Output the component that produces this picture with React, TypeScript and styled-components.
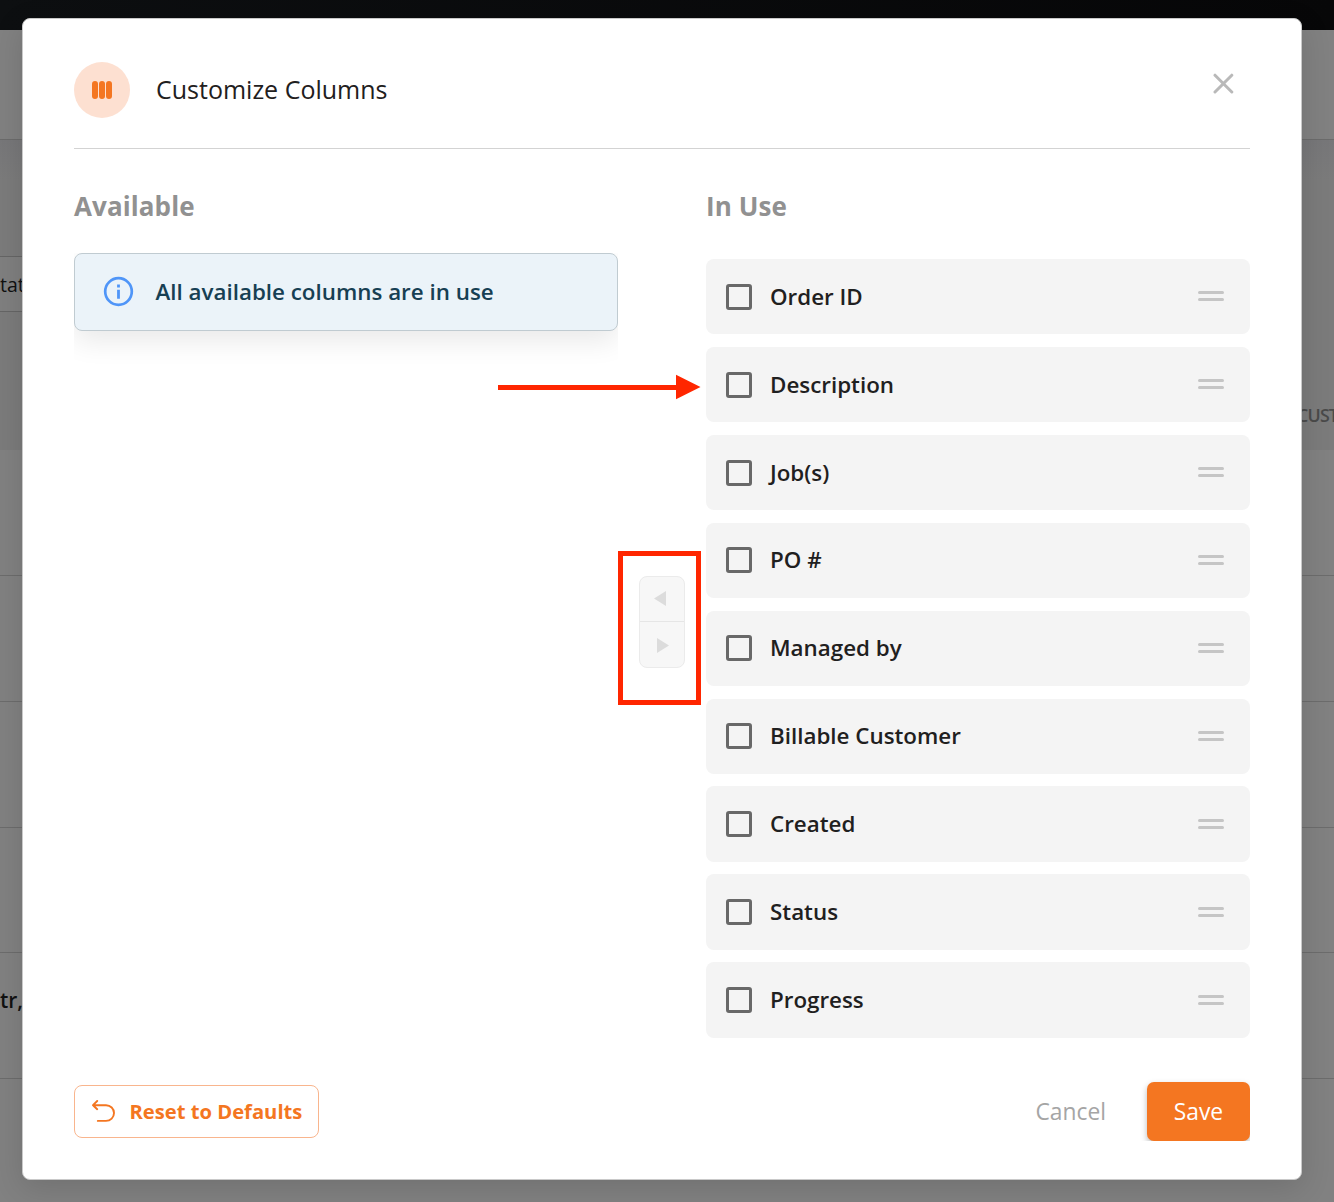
import React from "react";
import styled, { createGlobalStyle } from "styled-components";

const GlobalStyle = createGlobalStyle`
  *, *::before, *::after { box-sizing: border-box; }
  body {
    margin: 0;
    overflow: hidden;
    font-family: "Open Sans", "Noto Sans", sans-serif;
  }
  button { font-family: inherit; cursor: pointer; }
`;

const Screen = styled.div`
  position: relative;
  width: 1334px;
  height: 1202px;
  overflow: hidden;
`;

/* Dimmed page behind the dialog */
const Page = styled.div`
  display: flex;
  flex-direction: column;
  height: 100%;
  background: #818181;
`;

const TopBar = styled.div`
  height: 30px;
  background: linear-gradient(90deg, #0d0f11, #070708);
`;

const PageHeader = styled.div`
  height: 110px;
  border-bottom: 1px solid #6b6b6b;
`;

const FilterArea = styled.div`
  height: 310.3px;
  padding-top: 116px;
  background: linear-gradient(#777779, #7b7b7b 40px);
  display: flex;
  flex-direction: column;
`;

const FilterBox = styled.div`
  width: 400px;
  height: 56px;
  padding-top: 1px;
  border: 1px solid #656565;
  border-left: 0;
  background: #7f7f7f;
  display: flex;
  align-items: center;
  font-size: 19.5px;
  color: #111;
`;

const TableHead = styled.div`
  flex: 1;
  display: flex;
  justify-content: flex-end;
  align-items: flex-end;
  padding-bottom: 22px;
  white-space: nowrap;
`;

const TableHeadCell = styled.span`
  width: 37px;
  font-size: 17.8px;
  line-height: 25px;
  font-weight: 600;
  letter-spacing: -0.8px;
  color: #4a4a4a;
`;

const TableRow = styled.div`
  height: 125.75px;
  padding-bottom: 32px;
  border-bottom: 1px solid #6c6c6c;
  display: flex;
  align-items: center;
  font-size: 21px;
  font-weight: 600;
  color: #111;
  white-space: nowrap;
`;

const Overlay = styled.div`
  position: absolute;
  inset: 0;
  padding: 18px 32px 22px 22px;
`;

const Dialog = styled.section`
  width: 1280px;
  height: 1162px;
  padding: 43px 51px 0;
  background: #fff;
  border: 1px solid #c9c9c9;
  border-radius: 8px;
  box-shadow: 0 8px 30px rgba(0, 0, 0, 0.13);
  display: flex;
  flex-direction: column;
`;

const Header = styled.header`
  height: 87px;
  border-bottom: 1px solid #d3d3d3;
  display: flex;
  align-items: flex-start;
`;

const HeaderIcon = styled.div`
  width: 56px;
  height: 56px;
  border-radius: 50%;
  background: #fde0d1;
  display: flex;
  align-items: center;
  justify-content: center;
  gap: 1px;
`;

const IconBar = styled.span`
  width: 6px;
  height: 18px;
  border-radius: 3px;
  background: #f47621;
`;

const Title = styled.h1`
  flex: 1;
  margin: 0 0 0 26px;
  font-size: 25px;
  line-height: 54px;
  font-weight: 400;
  color: #1f2020;
`;

const CloseButton = styled.button`
  margin: 11px 16px 0 0;
  padding: 0;
  width: 21px;
  height: 21px;
  border: 0;
  background: none;
  display: flex;
`;

const Body = styled.div`
  height: 907px;
  display: grid;
  grid-template-columns: 544px 88px 544px;
`;

const Column = styled.div`
  display: flex;
  flex-direction: column;
`;

const ColumnTitle = styled.h2`
  margin: 38px 0 0;
  font-size: 26px;
  line-height: 38px;
  font-weight: 700;
  letter-spacing: 0.1px;
  color: #919191;
`;

const AlertWrap = styled.div`
  margin-top: 28px;
  height: 124px;
  overflow: hidden;
`;

const Alert = styled.div`
  height: 78px;
  padding: 0 0 2px 28px;
  border: 1px solid #c0cbd1;
  border-radius: 8px;
  background: #ebf3f9;
  box-shadow: 0 10px 28px rgba(0, 0, 0, 0.09);
  display: flex;
  align-items: center;
  gap: 21.5px;
  font-size: 22.36px;
  font-weight: 600;
  color: #173f53;
`;

const Mover = styled.div`
  margin: 427px 0 0 21px;
  width: 46px;
  height: 92px;
  border: 1px solid #ebebeb;
  border-radius: 8px;
  background: #f7f7f7;
  display: flex;
  flex-direction: column;
`;

const MoveButton = styled.button<{ $divided?: boolean }>`
  height: 45px;
  padding: ${(p) => (p.$divided ? "0 4px 1px 0" : "1px 0 0 2px")};
  border: 0;
  border-bottom: ${(p) => (p.$divided ? "1px solid #e6e6e6" : "0")};
  background: none;
  display: flex;
  align-items: center;
  justify-content: center;
`;

const List = styled.ul`
  margin: 34.15px 0 0;
  padding: 0;
  list-style: none;
  display: flex;
  flex-direction: column;
  gap: 12.6px;
`;

const Item = styled.li`
  height: 75.3px;
  padding: 0 26px 0 20px;
  border-radius: 8px;
  background: #f4f4f4;
  display: flex;
  align-items: center;
`;

const Checkbox = styled.span`
  width: 26px;
  height: 26px;
  border: 3px solid #686868;
  border-radius: 3px;
`;

const ItemLabel = styled.span`
  flex: 1;
  margin: 0 0 0 18px;
  font-size: 22.36px;
  line-height: 30px;
  font-weight: 600;
  color: #1f2020;
`;

const Handle = styled.span`
  width: 26px;
  height: 10px;
  margin-top: -0.6px;
  display: flex;
  flex-direction: column;
  justify-content: space-between;

  &::before, &::after {
    content: "";
    height: 3px;
    border-radius: 1.5px;
    background: #c5c5c5;
  }
`;

const Footer = styled.footer`
  height: 85px;
  overflow: hidden;
  display: flex;
  align-items: flex-end;
`;

const ResetButton = styled.button`
  width: 245px;
  height: 53px;
  margin: 0 auto 3px 0;
  padding: 0 0 1px 16.5px;
  border: 1px solid #f9b58d;
  border-radius: 8px;
  background: #fff;
  color: #f47621;
  display: flex;
  align-items: center;
  gap: 15px;
  font-size: 20.2px;
  font-weight: 700;
  white-space: nowrap;
`;

const CancelButton = styled.button`
  margin-right: 41px;
  padding: 0;
  height: 59px;
  border: 0;
  background: none;
  font-size: 22.8px;
  color: #a5a5a5;
`;

const SaveButton = styled.button`
  width: 103px;
  height: 59px;
  padding: 0;
  border: 0;
  border-radius: 7px;
  background: #f47621;
  box-shadow: 0 3px 6px rgba(0, 0, 0, 0.28);
  font-size: 22.8px;
  color: #fff;
`;

/* Red call-outs drawn over the dialog */
const ArrowMark = styled.svg`
  position: absolute;
  left: 498px;
  top: 374px;
`;

const BoxMark = styled.div`
  position: absolute;
  left: 618px;
  top: 551px;
  width: 83px;
  height: 154px;
  border: 5px solid #ff2600;
`;

const columns = [
  "Order ID",
  "Description",
  "Job(s)",
  "PO #",
  "Managed by",
  "Billable Customer",
  "Created",
  "Status",
  "Progress",
];

const tableRows = ["", "", "", "", "tr,"];

export default function App() {
  return (
    <Screen>
      <GlobalStyle />
      <Page>
        <TopBar />
        <PageHeader />
        <FilterArea>
          <FilterBox>tat</FilterBox>
          <TableHead>
            <TableHeadCell>CUST</TableHeadCell>
          </TableHead>
        </FilterArea>
        {tableRows.map((text, i) => (
          <TableRow key={i}>{text}</TableRow>
        ))}
      </Page>

      <Overlay>
        <Dialog role="dialog">
          <Header>
            <HeaderIcon>
              <IconBar />
              <IconBar />
              <IconBar />
            </HeaderIcon>
            <Title>Customize Columns</Title>
            <CloseButton aria-label="Close">
              <svg width="21" height="21" viewBox="0 0 21 21" fill="none" stroke="#b9b9b9" strokeWidth="3" strokeLinecap="round">
                <path d="M2 2.2 18.8 19M18.8 2.2 2 19" />
              </svg>
            </CloseButton>
          </Header>

          <Body>
            <Column>
              <ColumnTitle>Available</ColumnTitle>
              <AlertWrap>
                <Alert>
                  <svg width="31" height="31" viewBox="0 0 31 31" fill="none">
                    <circle cx="15.5" cy="15.5" r="13.3" stroke="#4f95f8" strokeWidth="2.7" />
                    <path d="M15.5 13.8V22.8M15.5 8.4V11.4" stroke="#4f95f8" strokeWidth="2.8" />
                  </svg>
                  All available columns are in use
                </Alert>
              </AlertWrap>
            </Column>

            <Mover>
              <MoveButton $divided aria-label="Move left">
                <svg width="12" height="15" viewBox="0 0 12 15">
                  <path d="M12 0V15L0 7.5Z" fill="#dcdcdc" />
                </svg>
              </MoveButton>
              <MoveButton aria-label="Move right">
                <svg width="12" height="15" viewBox="0 0 12 15">
                  <path d="M0 0V15L12 7.5Z" fill="#dcdcdc" />
                </svg>
              </MoveButton>
            </Mover>

            <Column>
              <ColumnTitle>In Use</ColumnTitle>
              <List>
                {columns.map((name) => (
                  <Item key={name}>
                    <Checkbox />
                    <ItemLabel>{name}</ItemLabel>
                    <Handle />
                  </Item>
                ))}
              </List>
            </Column>
          </Body>

          <Footer>
            <ResetButton>
              <svg width="23" height="22" viewBox="0 0 23 22" fill="none" stroke="#f47621" strokeWidth="1.9" strokeLinecap="round" strokeLinejoin="round">
                <path d="M5.2 1 1 5.2 5.2 9.2M1 5.2H14C18.5 5.2 22 8.6 22 13S18.5 20.9 14 20.9H5.8" />
              </svg>
              Reset to Defaults
            </ResetButton>
            <CancelButton>Cancel</CancelButton>
            <SaveButton>Save</SaveButton>
          </Footer>
        </Dialog>
      </Overlay>

      <ArrowMark width="203" height="26" viewBox="0 0 203 26">
        <path d="M0 11H178V.8L202.5 13 178 25.3V16H0Z" fill="#ff2600" />
      </ArrowMark>
      <BoxMark />
    </Screen>
  );
}
